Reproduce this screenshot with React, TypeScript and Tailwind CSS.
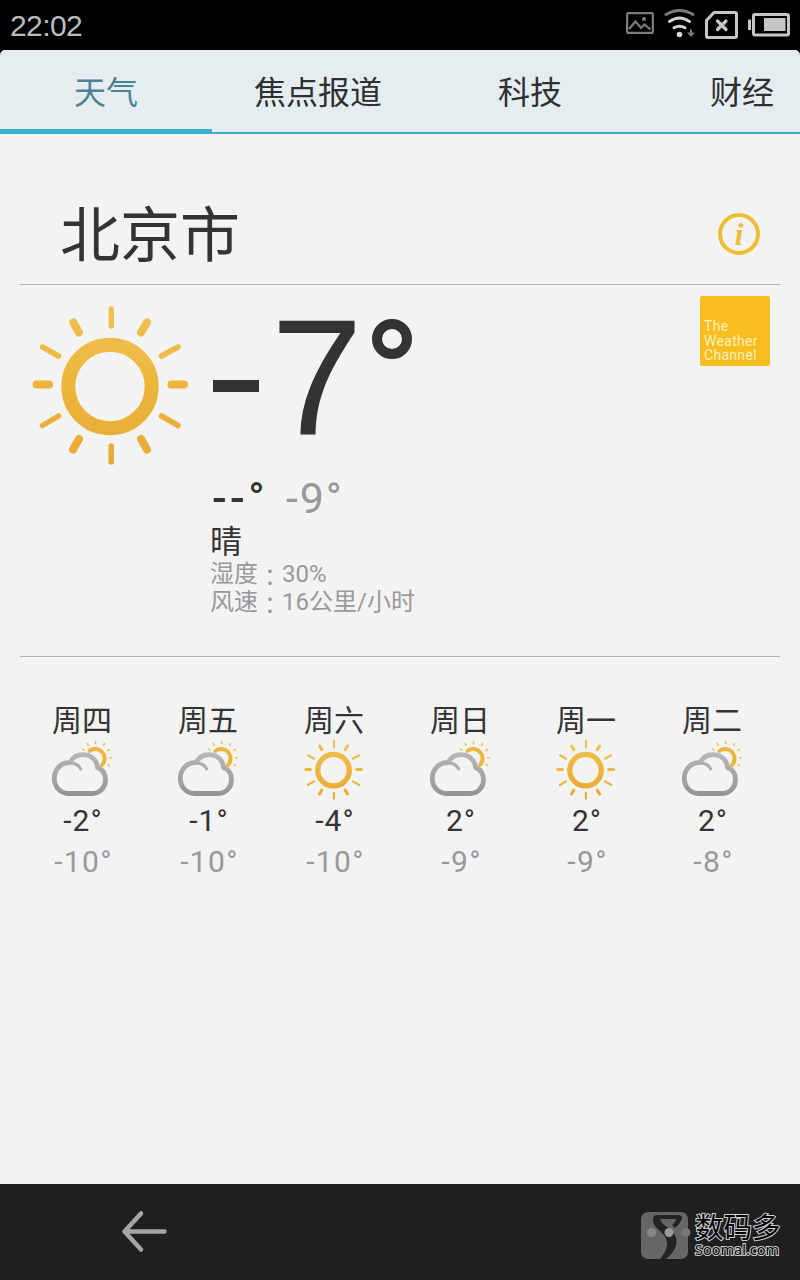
import clsx from "clsx";
import React from "react";

type Condition = "sunny" | "cloudy";

interface ForecastDay {
  day: string;
  condition: Condition;
  high: string;
  low: string;
}

const TABS = ["天气", "焦点报道", "科技", "财经"];

const DETAILS = [
  { label: "湿度", value: "30%" },
  { label: "风速", value: "16公里/小时" },
];

const FORECAST: ForecastDay[] = [
  { day: "周四", condition: "cloudy", high: "-2", low: "-10" },
  { day: "周五", condition: "cloudy", high: "-1", low: "-10" },
  { day: "周六", condition: "sunny", high: "-4", low: "-10" },
  { day: "周日", condition: "cloudy", high: "2", low: "-9" },
  { day: "周一", condition: "sunny", high: "2", low: "-9" },
  { day: "周二", condition: "cloudy", high: "2", low: "-8" },
];

const SunIcon = ({ id, ...rest }: React.ComponentProps<"svg">) => (
  <svg fill="none" strokeLinecap="round" viewBox="30 304 160 164" {...rest}>
    <defs>
      <linearGradient
        gradientUnits="userSpaceOnUse"
        id={id}
        x1="0"
        x2="0"
        y1="306"
        y2="466"
      >
        <stop offset="0" stopColor="#efc254" />
        <stop offset="0.5" stopColor="#edb53c" />
        <stop offset="1" stopColor="#e8aa35" />
      </linearGradient>
    </defs>
    <g stroke={`url(#${id})`}>
      <circle cx="110" cy="386.5" r="41.7" strokeWidth="14" />
      <path
        d="M42.5 347 58.5 356M178 347 161.5 356M42.5 425.5 58.5 416M178 425.5 161.5 416M111.3 309V326M111.2 446V462"
        strokeWidth="5.5"
      />
      <path
        d="M36.5 384.5 49 384.6M171.5 384.6 184 384.5M73.3 322.5 79 332.5M147 322.5 141 332.5M79 439 73 449.5M141 439 147 449.5"
        strokeWidth="8"
      />
    </g>
  </svg>
);

const CloudIcon = ({ id, ...rest }: React.ComponentProps<"svg">) => (
  <svg fill="none" strokeLinecap="round" viewBox="0 0 60 60" {...rest}>
    <defs>
      <linearGradient
        gradientUnits="userSpaceOnUse"
        id={id}
        x1="0"
        x2="0"
        y1="12"
        y2="56"
      >
        <stop offset="0" stopColor="#b8b8b8" />
        <stop offset="1" stopColor="#949494" />
      </linearGradient>
    </defs>
    <path d="M37.5 10.8A9.5 9.5 0 0 1 50 25" stroke="#edb640" strokeWidth="4" />
    <path
      d="M43.5 1.5V3.5M35.2 3.5 36.2 5.5M52.5 3.5 51.5 5.5M57.5 9.5 55.8 10.5M30.5 9 32 10.2M57.5 17.7H59.3M55.8 24.5 57.5 25.7"
      stroke="#ecc266"
      strokeWidth="1.6"
    />
    <path
      d="M16.5 53.5H40C48 53.5 53.5 47 53.5 40C53.5 34 50.5 29.5 45.5 27.5C45 20 39 14.6 31 14.6C25 14.6 20.5 17.5 18 22.5C8 22.5 2.3 30 2.3 38.5C2.3 47 8.5 53.5 16.5 53.5Z"
      fill="#f3f3f3"
      stroke={`url(#${id})`}
      strokeLinejoin="round"
      strokeWidth="4.8"
    />
    <path
      d="M18 22.7C22.5 22.8 26.5 24.8 28.7 29"
      stroke="#adadad"
      strokeWidth="3"
    />
  </svg>
);

const StatusBar = () => (
  <header className="flex h-[50px] items-start justify-between bg-black px-2.5">
    <span className="mt-[7px] font-['Liberation_Sans'] text-[30px] text-[#bdbdbd] leading-[38px] tracking-[-0.6px]">
      22:02
    </span>
    <svg className="h-[50px] w-[165px]" fill="none" viewBox="625 0 165 50">
      <g stroke="#7c7c7c" strokeWidth="2.2">
        <rect height="19.8" rx="1.5" width="25.8" x="627.1" y="13.1" />
        <path d="M629 29 635.5 21.5 641 28 644.5 24.5 650.5 29.5" />
      </g>
      <circle cx="644" cy="19" fill="#7c7c7c" r="2.1" />
      <g strokeLinecap="round" strokeWidth="3">
        <path d="M666 14.5Q679.5 6.5 693 14.5" stroke="#7c7c7c" />
        <path
          d="M669.5 21.5Q679.5 14.5 689.5 21.5M674 27.8Q679.5 24.5 685 27.8"
          stroke="#d2d2d2"
        />
      </g>
      <circle cx="679.5" cy="34.5" fill="#d8d8d8" r="2.8" />
      <path d="M690 29.5H692V32.5H695L691 37 687 32.5H690Z" fill="#7c7c7c" />
      <g stroke="#c6c6c6">
        <path
          d="M714 12.5H735A1.5 1.5 0 0 1 736.5 14V36A1.5 1.5 0 0 1 735 37.5H708A1.5 1.5 0 0 1 706.5 36V20.5Z"
          strokeLinejoin="round"
          strokeWidth="3"
        />
        <path
          d="M717.5 21 726 29.5M726 21 717.5 29.5"
          strokeLinecap="round"
          strokeWidth="3.3"
        />
        <rect
          height="20.5"
          rx="1.5"
          strokeWidth="3"
          width="35"
          x="753.5"
          y="14.5"
        />
      </g>
      <path d="M748 19.5H751V30H748ZM764 18H785.5V31H764Z" fill="#c6c6c6" />
    </svg>
  </header>
);

const TabBar = () => (
  <div className="bg-black">
    <nav className="flex h-[84px] overflow-hidden rounded-t-[5px] bg-[#e6edf0]">
      {TABS.map((tab, index) => (
        <div
          className={clsx(
            "flex w-[212px] shrink-0 items-start justify-center border-[#3dadcd] pt-[22px] text-[32px] leading-[42px]",
            index === 0
              ? "border-b-[5px] text-[#4c8592]"
              : "border-b-2 text-[#2d3031]"
          )}
          key={tab}
        >
          {tab}
        </div>
      ))}
    </nav>
  </div>
);

const Current = () => (
  <section className="mx-5 flex h-[372px] border-[#b3b3b3] border-b">
    <SunIcon
      className="mt-[19px] ml-2.5 h-[164px] w-[160px] shrink-0"
      id="sun"
    />
    <div className="flex grow flex-col pl-5">
      <div className="flex h-[190px] items-start text-[#333]">
        <span className="mt-[95px] ml-[3px] h-3 w-[46px] overflow-hidden bg-[#333] text-transparent text-xs leading-3">
          -
        </span>
        <span className="mt-[17px] ml-3 w-[97px] font-['Liberation_Sans'] text-[165px] leading-[150px]">
          7
        </span>
        <span className="mt-[34px] ml-[4px] size-10 overflow-hidden rounded-full border-10 border-[#333] text-transparent text-xs leading-5">
          °
        </span>
      </div>
      <div className="flex h-[48px] text-[43px] leading-[46px]">
        <span className="w-[76px] pl-[2px] font-medium text-[#333] tracking-[3.5px]">
          --°
        </span>
        <span className="text-[#999] tracking-[1.8px]">-9°</span>
      </div>
      <div className="h-[37px] text-[#333] text-[32px] leading-[38px]">晴</div>
      <div className="text-[#999] text-[24px] leading-7">
        {DETAILS.map(({ label, value }) => (
          <div className="flex h-7" key={label}>
            <span>{label}</span>
            <span className="pt-0.5 font-['Noto_Sans_CJK_TC']">：</span>
            <span>{value}</span>
          </div>
        ))}
      </div>
    </div>
    <div className="mt-[11px] mr-2.5 h-[70px] w-[70px] shrink-0 rounded-xs bg-[#f8bd20] pt-[23px] pl-1 font-[Roboto] text-[#fff1bd] text-[14px] leading-[14.5px] tracking-[0.3px]">
      <div>The</div>
      <div>Weather</div>
      <div>Channel</div>
    </div>
  </section>
);

const ForecastColumn = ({ day, condition, high, low }: ForecastDay) => (
  <div className="flex w-[126px] flex-col items-center text-[30px]">
    <div className="h-10 pt-px text-[#333] leading-10">{day}</div>
    <div className="flex h-[60px] items-center justify-center">
      {condition === "sunny" ? (
        <SunIcon className="mr-px mb-px h-[62px] w-[61px]" id={`icon-${day}`} />
      ) : (
        <CloudIcon className="size-[60px]" id={`icon-${day}`} />
      )}
    </div>
    <div className="h-10 pt-px pl-0.5 text-[#333] leading-10 tracking-[1px]">
      {high}°
    </div>
    <div className="h-[42px] pt-px pl-[3px] text-[#999] leading-[42px] tracking-[1.3px]">
      {low}°
    </div>
  </div>
);

const Watermark = () => (
  <div className="flex w-[139px] items-start gap-[4px]">
    <svg className="mt-[4px] h-[47px] w-[50px] shrink-0" viewBox="0 0 50 47">
      <rect fill="#666" height="47" rx="7" width="47" />
      <path
        d="M12 7Q12 3 17 3H36Q42 3 41 7Q39 12 34 16L31 13Q35 10 35 7H19Q20 11 26 15C39 23 39 36 25 47H19C29 35 28 27 19 19C13 14 12 11 12 7Z"
        fill="#232323"
      />
      <circle cx="10.5" cy="20.5" fill="#888" r="4.5" />
      <circle cx="28" cy="20.5" fill="#999" r="4.5" />
      <circle cx="45" cy="20.5" fill="#777" r="4.5" />
    </svg>
    <div className="whitespace-nowrap text-black [-webkit-text-stroke:2px_#d0d0d0] [paint-order:stroke_fill]">
      <div className="h-[32px] pt-px text-[28.5px] leading-[39px]">数码多</div>
      <div className="font-['Noto_Sans'] text-[14.5px] leading-[18px]">
        Soomal.com
      </div>
    </div>
  </div>
);

export default function App() {
  return (
    <div className="flex h-[1280px] w-[800px] flex-col overflow-hidden bg-[#f3f3f3] font-[Roboto,'Noto_Sans_CJK_SC',sans-serif]">
      <StatusBar />
      <TabBar />
      <main className="grow">
        <div className="mx-5 flex h-[151px] items-start justify-between border-[#b3b3b3] border-b pr-5 pl-10">
          <h1 className="mt-[63px] text-[#333] text-[60px] leading-[80px]">
            北京市
          </h1>
          <span className="mt-[79px] flex size-[42px] items-center justify-center rounded-full border-[#edbd35] border-4 font-['Liberation_Serif'] font-bold text-[#edbd35] text-[31px] italic leading-none">
            i
          </span>
        </div>
        <Current />
        <div className="mt-[43px] ml-[19px] flex">
          {FORECAST.map((item) => (
            <ForecastColumn key={item.day} {...item} />
          ))}
        </div>
      </main>
      <footer className="flex h-24 items-start justify-between bg-[#1f1f1f] pr-5 pl-[120px]">
        <svg
          className="mt-[25px] h-[44px] w-[48px]"
          fill="none"
          stroke="#a6a6a6"
          strokeLinecap="round"
          strokeLinejoin="round"
          strokeWidth="4.5"
          viewBox="0 0 48 44"
        >
          <path d="M21 4.5 4.5 22.5 21 40.5M4.5 22.5H44.5" />
        </svg>
        <div className="mt-6">
          <Watermark />
        </div>
      </footer>
    </div>
  );
}
